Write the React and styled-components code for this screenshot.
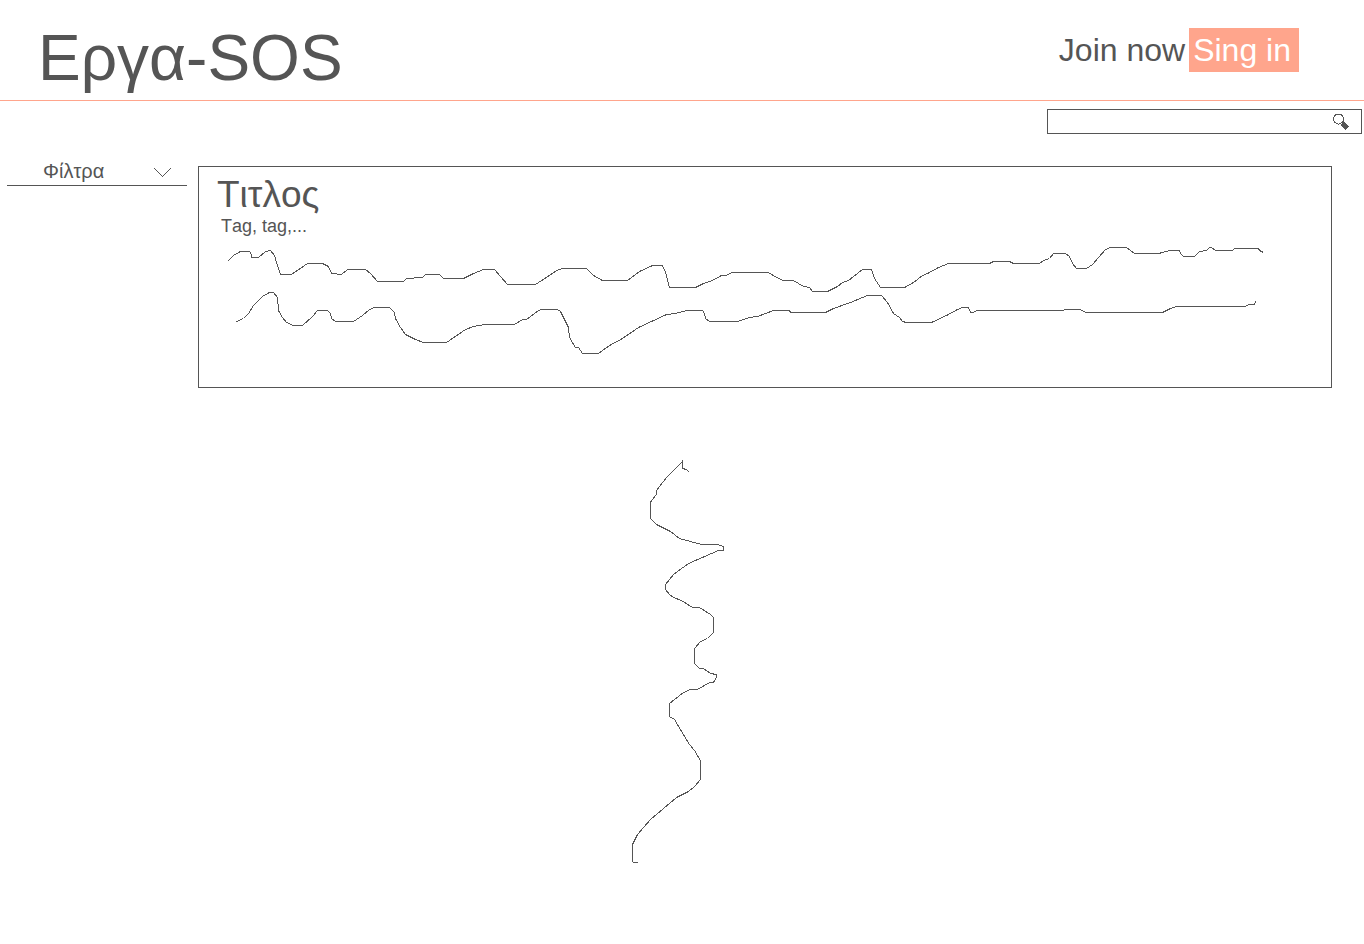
import React from "react";
import styled, { createGlobalStyle } from "styled-components";

const ink = "#555555";
const coral = "#ffa58c";

const GlobalStyle = createGlobalStyle`
  *, *::before, *::after { box-sizing: border-box; }
  body {
    margin: 0;
    background: #fff;
    color: ${ink};
    font-family: "Liberation Sans", Arial, sans-serif;
    font-kerning: none;
  }
`;

const Header = styled.header`
  display: flex;
  justify-content: space-between;
  align-items: flex-start;
  padding: 22px 65px 5px 38px;
  border-bottom: 1px solid ${coral};
`;

const Brand = styled.h1`
  margin: 0;
  font-size: 64px;
  line-height: 73px;
  font-weight: 400;
`;

const Account = styled.nav`
  display: flex;
  align-items: center;
  gap: 4px;
  padding-top: 6px;
`;

const AccountLink = styled.a`
  padding: ${(p) => (p.$filled ? "0 8px 0 4px" : "0")};
  background: ${(p) => (p.$filled ? coral : "transparent")};
  color: ${(p) => (p.$filled ? "#fff" : ink)};
  font-size: 32px;
  line-height: 44px;
  text-decoration: none;
`;

const SearchRow = styled.div`
  display: flex;
  justify-content: flex-end;
  padding: 8px 2px 0;
`;

const SearchForm = styled.form`
  display: flex;
  width: 315px;
  height: 25px;
  border: 1px solid ${ink};
`;

const SearchInput = styled.input`
  flex: 1;
  min-width: 0;
  padding: 0 8px;
  border: 0;
  outline: 0;
  background: transparent;
  color: ${ink};
  font: inherit;
`;

const IconButton = styled.button`
  display: flex;
  align-items: center;
  padding: 0 11px 0 4px;
  border: 0;
  background: none;
  cursor: pointer;
`;

const Content = styled.div`
  display: flex;
  align-items: flex-start;
  gap: 11px;
  padding: 32px 32px 0 7px;
`;

const Sidebar = styled.aside`
  flex: 0 0 180px;
`;

const FilterButton = styled.button`
  display: flex;
  justify-content: space-between;
  align-items: flex-start;
  width: 100%;
  height: 20px;
  padding: 0 16px 0 36px;
  border: 0;
  border-bottom: 1px solid ${ink};
  background: none;
  color: ${ink};
  font-family: inherit;
  font-size: 20px;
  line-height: 10px;
  cursor: pointer;
`;

const Card = styled.article`
  flex: 1;
  min-width: 0;
  padding: 8px 18px 31px;
  border: 1px solid ${ink};
`;

const CardTitle = styled.h2`
  margin: 0;
  font-size: 37px;
  line-height: 40px;
  font-weight: 400;
`;

const Tags = styled.p`
  margin: 0 0 6px;
  padding-left: 4px;
  font-size: 18px;
  line-height: 23px;
`;

const Drawing = styled.svg`
  display: block;
  flex-shrink: 0;
  fill: none;
  stroke: ${ink};
  stroke-width: 1;
  shape-rendering: crispEdges;
`;

const TextLines = styled(Drawing)`
  width: 100%;
  height: auto;
`;

const More = styled.div`
  display: flex;
  justify-content: center;
  padding: 70px 0 80px;
`;

const upperLine =
  "227,261 233,255 240,251 249,251 251,254 251,257 258,257 265,251 270,250 274,255 276,262 280,274 291,274 307,263 322,263 328,266 331,273 341,274 347,269 365,269 370,273 377,281 403,281 406,278 422,277 425,274 439,274 443,278 463,278 473,273 483,269 494,269 507,284 535,284 558,269 563,268 586,268 593,275 602,280 627,280 639,271 652,265 662,265 665,272 669,287 695,287 703,283 712,280 721,275 725,275 732,272 768,272 776,277 783,280 793,280 803,286 809,287 812,291 827,291 837,286 842,282 848,280 862,269 871,269 874,278 880,287 904,287 913,282 922,275 927,273 938,267 948,263 989,263 993,261 1009,261 1013,263 1039,263 1043,260 1049,258 1053,253 1065,253 1069,256 1072,263 1076,268 1086,268 1092,264 1105,249 1110,247 1126,247 1134,253 1158,253 1162,252 1169,250 1179,250 1180,253 1183,256 1194,256 1199,251 1206,250 1209,247 1211,247 1215,250 1232,250 1234,248 1258,248 1259,250 1263,252";

const lowerLine =
  "236,321 243,318 248,313 253,305 262,296 269,292 273,292 277,297 278,310 282,317 286,322 289,323 292,325 302,325 312,316 317,310 327,310 330,313 331,318 335,321 353,321 362,315 369,309 374,307 389,307 394,312 395,318 400,327 405,334 415,339 423,342 446,342 465,329 473,326 484,324 514,324 522,319 526,319 538,310 541,309 557,309 560,311 568,327 569,337 575,347 578,347 582,353 598,353 609,345 622,338 638,327 666,314 675,313 686,310 702,310 704,313 705,318 709,321 737,321 749,317 757,316 773,310 789,310 790,312 825,312 833,308 850,302 867,295 881,295 887,302 893,313 899,317 902,321 906,322 931,322 948,314 957,309 962,307 968,307 970,312 973,312 976,310 1063,310 1064,309 1080,309 1085,312 1162,312 1170,308 1176,306 1245,306 1248,304 1254,304 1255,301";

const continuation =
  "689,472 686,469 682,468 682,459 682,461 666,477 656,490 656,494 651,500 650,502 650,518 656,524 670,531 679,538 701,544 717,544 723,546 723,550 718,550 688,563 673,574 665,584 665,589 669,594 673,597 681,600 692,607 699,607 710,614 713,617 713,632 707,638 700,641 694,648 694,663 699,668 703,668 710,673 716,674 716,677 713,682 709,682 697,689 690,689 683,692 674,699 669,703 669,716 674,719 689,744 694,750 700,760 700,779 694,786 688,791 676,797 650,819 637,834 632,844 632,861 633,862 637,862";

export default function App() {
  return (
    <>
      <GlobalStyle />
      <Header>
        <Brand>Εργα-SOS</Brand>
        <Account aria-label="Account">
          <AccountLink href="#join">Join now</AccountLink>
          <AccountLink href="#signin" $filled>Sing in</AccountLink>
        </Account>
      </Header>
      <SearchRow>
        <SearchForm role="search" onSubmit={(e) => e.preventDefault()}>
          <SearchInput type="search" aria-label="Search" />
          <IconButton type="submit" aria-label="Search">
            <Drawing width="17" height="16" viewBox="0 0 17 16">
              <circle cx="5.5" cy="5" r="5" />
              <path d="M9 9l5.500 5" strokeWidth="5" />
            </Drawing>
          </IconButton>
        </SearchForm>
      </SearchRow>
      <Content>
        <Sidebar>
          <FilterButton type="button" aria-expanded="false">
            Φίλτρα
            <Drawing width="17" height="11" viewBox="0 0 17 11">
              <path d="M0.5 2.500l8 8l8-8" />
            </Drawing>
          </FilterButton>
        </Sidebar>
        <Card>
          <CardTitle>Τιτλος</CardTitle>
          <Tags>Tag, tag,...</Tags>
          <TextLines viewBox="217 244 1096 112" aria-hidden="true">
            <g transform="translate(0.5 0.5)">
              <polyline points={upperLine} />
              <polyline points={lowerLine} />
            </g>
          </TextLines>
        </Card>
      </Content>
      <More>
        <Drawing width="102" height="406" viewBox="631 458 102 406" aria-hidden="true">
          <polyline points={continuation} transform="translate(0.5 0.5)" />
        </Drawing>
      </More>
    </>
  );
}
